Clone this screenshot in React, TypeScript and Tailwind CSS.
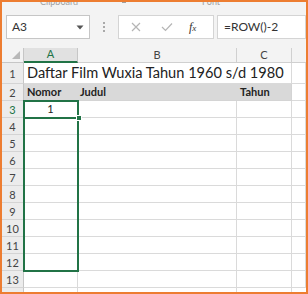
import React from "react";

const GRID = "border-[#dadada]";

function RowHeader({ n, active }: { n: number | string; active?: boolean }) {
  return (
    <div
      className={`flex items-center justify-center border-b border-r border-b-[#d4d4d4] border-r-[#c6c6c6] bg-[#ececec] text-[11px] leading-none ${
        active ? "text-[#217346]" : "text-[#444]"
      }`}
    >
      {n}
    </div>
  );
}

function Cell({ children, className = "" }: { children?: React.ReactNode; className?: string }) {
  return <div className={`border-b border-r ${GRID} bg-white ${className}`}>{children}</div>;
}

export default function App() {
  const rows = [4, 5, 6, 7, 8, 9, 10, 11, 12, 13];
  return (
    <div className="w-[308px] h-[294px] border-2 border-[#ed7d31] bg-[#f3f3f3] overflow-hidden flex flex-col font-['Lato',sans-serif]">
      {/* ribbon remnants */}
      <div className="h-[5px] overflow-hidden flex items-start text-[9px] leading-[9px] text-[#a0a0a0]">
        <span className="-mt-[5px] ml-[38px]">Clipboard</span>
        <span className="-mt-[3px] ml-[44px] w-[4px] h-[4px] border-r border-b border-[#a0a0a0]" />
        <span className="-mt-[5px] ml-[76px]">Font</span>
      </div>
      {/* formula bar */}
      <div className="mt-[8px] h-[24px] flex items-stretch">
        <div className="ml-[4px] w-[84px] bg-white border border-[#c6c6c6] flex items-center justify-between px-[5px]">
          <span className="text-[12px] text-[#333]">A3</span>
          <svg width="8" height="5" viewBox="0 0 8 5">
            <path d="M0.5 0.5 L7.5 0.5 L4 4.5 Z" fill="#555" />
          </svg>
        </div>
        <div className="w-[28px] flex flex-col items-center justify-center gap-[2px]">
          <span className="w-[2px] h-[2px] bg-[#a9a9a9]" />
          <span className="w-[2px] h-[2px] bg-[#a9a9a9]" />
          <span className="w-[2px] h-[2px] bg-[#a9a9a9]" />
        </div>
        <div className="w-[96px] bg-white border border-[#d4d4d4] flex items-center">
          <svg className="ml-[12px]" width="10" height="10" viewBox="0 0 10 10">
            <path d="M1 1 L9 9 M9 1 L1 9" stroke="#b5b5b5" strokeWidth="1.2" />
          </svg>
          <svg className="ml-[20px]" width="12" height="10" viewBox="0 0 12 10">
            <path d="M1 5 L4.5 8.5 L11 1.5" stroke="#b5b5b5" strokeWidth="1.2" fill="none" />
          </svg>
          <span className="ml-[16px] text-[12px] italic font-['Liberation_Serif',serif] text-[#333]">
            f<span className="text-[9px]">x</span>
          </span>
        </div>
        <div className="ml-[3px] flex-1 bg-white border border-[#d4d4d4] flex items-center pl-[6px]">
          <span className="text-[12px] text-[#333]">=ROW()-2</span>
        </div>
      </div>
      {/* grid */}
      <div className="mt-[9px] relative">
        <div className="grid grid-cols-[22px_54px_159px_55px_14px] grid-rows-[15px_21px_repeat(12,17px)_4px]">
          {/* column headers */}
          <div className="border-r border-b border-[#c6c6c6] bg-[#f3f3f3] relative">
            <svg className="absolute right-[3px] bottom-[3px]" width="8" height="8" viewBox="0 0 8 8">
              <path d="M8 0 L8 8 L0 8 Z" fill="#b8b8b8" />
            </svg>
          </div>
          <div className="border-r border-[#c6c6c6] border-b-2 border-b-[#217346] bg-[#e1e1e1] flex items-center justify-center text-[11px] text-[#217346]">
            A
          </div>
          <div className="border-r border-b border-[#d0d0d0] bg-[#f3f3f3] flex items-center justify-center text-[11px] text-[#444]">
            B
          </div>
          <div className="border-r border-b border-[#d0d0d0] bg-[#f3f3f3] flex items-center justify-center text-[11px] text-[#444]">
            C
          </div>
          <div className="border-b border-[#d0d0d0] bg-[#f3f3f3]" />

          {/* row 1 */}
          <RowHeader n={1} />
          <Cell className="col-span-3 flex items-center pl-[3px] pt-[1px]">
            <span className="text-[14.6px] leading-none text-[#222] whitespace-nowrap">
              Daftar Film Wuxia Tahun 1960 s/d 1980
            </span>
          </Cell>
          <Cell />

          {/* row 2 */}
          <RowHeader n={2} />
          <div className="border-b border-[#d4d4d4] bg-[#d9d9d9] flex items-center pl-[3px] text-[11px] font-bold text-[#222]">
            Nomor
          </div>
          <div className="border-b border-[#d4d4d4] bg-[#d9d9d9] flex items-center pl-[2px] text-[11px] font-bold text-[#222]">
            Judul
          </div>
          <div className="border-b border-r border-[#d4d4d4] bg-[#d9d9d9] flex items-center pl-[3px] text-[11px] font-bold text-[#222]">
            Tahun
          </div>
          <Cell />

          {/* row 3 */}
          <RowHeader n={3} active />
          <Cell className="flex items-center justify-center text-[11px] text-[#222]">1</Cell>
          <Cell />
          <Cell />
          <Cell />

          {rows.map((r) => (
            <React.Fragment key={r}>
              <RowHeader n={r} />
              <Cell />
              <Cell />
              <Cell />
              <Cell />
            </React.Fragment>
          ))}
          <div className="border-r border-[#c6c6c6] bg-[#ececec]" />
          <div className="border-r border-[#dadada] bg-white" />
          <div className="border-r border-[#dadada] bg-white" />
          <div className="border-r border-[#dadada] bg-white" />
          <div className="bg-white" />
        </div>
        {/* selection */}
        <div className="absolute left-[21px] top-[52px] w-[56px] h-[172px] border-2 border-[#217346]" />
        <div className="absolute left-[21px] top-[69px] w-[56px] h-[2px] bg-[#217346]" />
        <div className="absolute left-[74px] top-[67px] w-[6px] h-[6px] bg-[#217346] border border-white" />
      </div>
    </div>
  );
}
